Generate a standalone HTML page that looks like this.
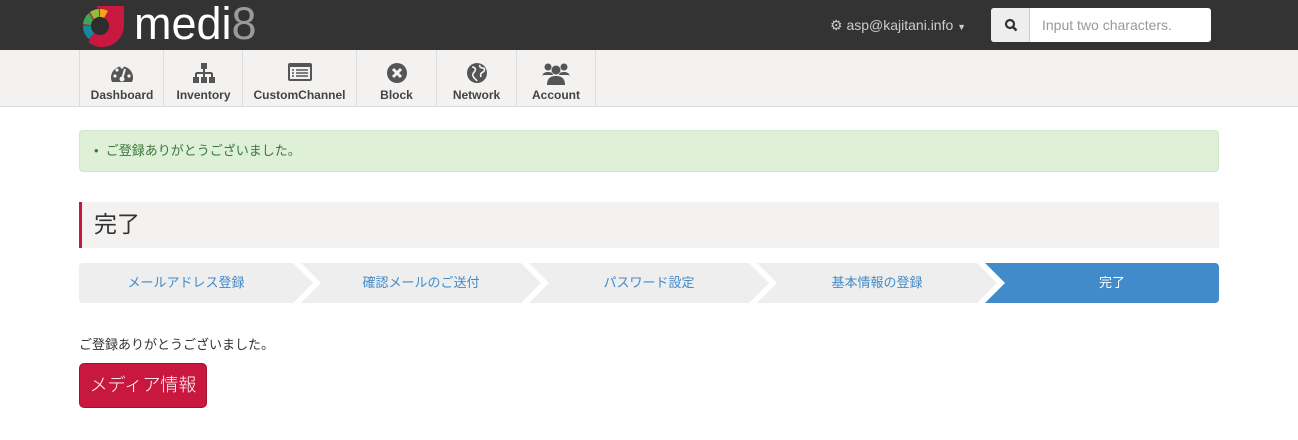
<!DOCTYPE html>
<html><head><meta charset="utf-8"><style>
*{box-sizing:border-box;margin:0;padding:0}
body{width:1298px;height:440px;background:#fff;font-family:"Liberation Sans","Noto Sans CJK JP",sans-serif;position:relative;overflow:hidden;font-size:13px}
.top{position:absolute;left:0;top:0;width:1298px;height:50px;background:#333}
.nav{position:absolute;left:0;top:50px;width:1298px;height:57px;background:#f3f2f0;border-bottom:1px solid #ddd}
.ni{position:absolute;top:0;height:56px;border-left:1px solid #ddd;text-align:center;color:#444;font-weight:bold;font-size:12px}
.ni span{position:absolute;left:0;right:0;top:38px}
.ni svg{position:absolute;left:50%;top:12px;transform:translateX(-50%)}
.abs{position:absolute}
.step{position:absolute;top:263px;height:40px;color:#428bca;font-size:13px;line-height:40px;text-align:center}
</style></head><body>
<div class="top">
  <svg class="abs" style="left:80px;top:4px" width="46" height="44" viewBox="0 0 46 44">
    <path d="M16 2 L44 2 L44 22 A22 22 0 0 1 8 38 L20 28 A9 9 0 0 0 28 14 Z" fill="#c8183f"/>
    <circle cx="20" cy="22" r="17" fill="#c8183f"/>
    <path d="M20 5 A17 17 0 0 1 28 7 L24 14 A9 9 0 0 0 20 13Z" fill="#f3a51c"/>
    <path d="M10 8 A17 17 0 0 1 19 5 L19 13 A9 9 0 0 0 14 15Z" fill="#8fbf3a"/>
    <path d="M3 20 A17 17 0 0 1 9 9 L13 16 A9 9 0 0 0 11 21Z" fill="#3aa857"/>
    <path d="M3 22 L11 22 A9 9 0 0 0 14 29 L9 35 A17 17 0 0 1 3 22Z" fill="#138a9e"/>
    <circle cx="20" cy="22" r="9" fill="#2d2d2d"/>
  </svg>
  <div class="abs" style="left:134px;top:0px;font-size:45px;color:#fff;letter-spacing:0px;line-height:48px">medi<span style="color:#9a9a9a;font-weight:300">8</span></div>
  <div class="abs" style="left:830px;top:17px;color:#ccc;font-size:14px">&#9881; asp@kajitani.info <span style="font-size:9px">&#9660;</span></div>
  <div class="abs" style="left:991px;top:8px;width:220px;height:34px;background:#fff;border-radius:3px"></div>
  <div class="abs" style="left:991px;top:8px;width:39px;height:34px;background:#eee;border-right:1px solid #ccc;border-radius:3px 0 0 3px"></div>
  <svg class="abs" style="left:1004px;top:18px" width="14" height="14" viewBox="0 0 14 14"><circle cx="6" cy="6" r="4" stroke="#333" stroke-width="2.2" fill="none"/><path d="M9 9l3.5 3.5" stroke="#333" stroke-width="2.5"/></svg>
  <div class="abs" style="left:1042px;top:17px;color:#999;font-size:14px">Input two characters.</div>
</div>
<div class="nav">
  <div class="ni" style="left:79px;width:85px"><svg width="26" height="22" viewBox="0 0 26 22"><path d="M3 20A11 11 0 1 1 23 20Z" fill="#555"/><circle cx="13" cy="17" r="2.5" fill="#f3f2f0"/><path d="M13 17L16 7" stroke="#f3f2f0" stroke-width="2"/><circle cx="6" cy="14" r="1.6" fill="#f3f2f0"/><circle cx="8" cy="8" r="1.6" fill="#f3f2f0"/><circle cx="20" cy="14" r="1.6" fill="#f3f2f0"/><circle cx="13" cy="5" r="1.6" fill="#f3f2f0"/></svg><span>Dashboard</span></div>
  <div class="ni" style="left:163px;width:80px"><svg width="24" height="22" viewBox="0 0 24 22"><rect x="9" y="1" width="6" height="6" fill="#555"/><path d="M12 7v4M4 11h16M4 11v4M12 11v4M20 11v4" stroke="#555" stroke-width="2" fill="none"/><rect x="1" y="15" width="6" height="6" fill="#555"/><rect x="9" y="15" width="6" height="6" fill="#555"/><rect x="17" y="15" width="6" height="6" fill="#555"/></svg><span>Inventory</span></div>
  <div class="ni" style="left:242px;width:114px"><svg width="26" height="20" viewBox="0 0 26 20"><rect x="1" y="1" width="24" height="18" rx="2" fill="#555"/><rect x="3" y="5" width="20" height="12" fill="#f3f2f0"/><path d="M5 8h2M9 8h12M5 11h2M9 11h12M5 14h2M9 14h12" stroke="#555" stroke-width="1.5"/></svg><span>CustomChannel</span></div>
  <div class="ni" style="left:356px;width:80px"><svg width="22" height="22" viewBox="0 0 22 22"><circle cx="11" cy="11" r="10" fill="#555"/><path d="M7 7l8 8M15 7l-8 8" stroke="#f3f2f0" stroke-width="3"/></svg><span>Block</span></div>
  <div class="ni" style="left:436px;width:80px"><svg width="22" height="22" viewBox="0 0 22 22"><circle cx="11" cy="11" r="10" fill="#555"/><path d="M6 5c3 0 4 2 3 4s-3 2-2 5 3 3 4 5M14 3c-1 2 1 3 3 3s2 3 0 4-3 2-2 5" stroke="#f3f2f0" stroke-width="1.6" fill="none"/></svg><span>Network</span></div>
  <div class="ni" style="left:516px;width:80px;border-right:1px solid #ddd"><svg width="30" height="24" viewBox="0 0 30 24"><circle cx="7" cy="5" r="3.5" fill="#555"/><circle cx="23" cy="5" r="3.5" fill="#555"/><circle cx="15" cy="8" r="4.5" fill="#555"/><path d="M1 16c0-5 3-6 6-6s5 1 5 3H1z" fill="#555"/><path d="M29 16c0-5-3-6-6-6s-5 1-5 3h11z" fill="#555"/><path d="M6 23c0-7 4-9 9-9s9 2 9 9z" fill="#555"/></svg><span>Account</span></div>
</div>
<div class="abs" style="left:79px;top:130px;width:1140px;height:42px;background:#dff0d8;border:1px solid #d0e9c6;border-radius:4px;color:#3c763d;font-size:13px;line-height:40px;padding-left:14px">•&nbsp;&nbsp;ご登録ありがとうございました。</div>
<div class="abs" style="left:79px;top:202px;width:1140px;height:46px;background:#f3f2f0;border-left:3px solid #c8183f;font-size:23px;color:#333;line-height:44px;padding-left:12px">完了</div>
<div class="step" style="left:79px;width:234px;background:#eee;clip-path:polygon(0 0,214px 0,234px 20px,214px 40px,0 40px);border-radius:4px 0 0 4px"><span style="margin-right:20px">メールアドレス登録</span></div>
<div class="step" style="left:301px;width:240px;background:#eee;clip-path:polygon(0 0,220px 0,240px 20px,220px 40px,0 40px,20px 20px)">確認メールのご送付</div>
<div class="step" style="left:529px;width:240px;background:#eee;clip-path:polygon(0 0,220px 0,240px 20px,220px 40px,0 40px,20px 20px)">パスワード設定</div>
<div class="step" style="left:757px;width:240px;background:#eee;clip-path:polygon(0 0,220px 0,240px 20px,220px 40px,0 40px,20px 20px)">基本情報の登録</div>
<div class="step" style="left:985px;width:234px;background:#428bca;color:#fff;border-radius:0 4px 4px 0;clip-path:polygon(0 0,234px 0,234px 40px,0 40px,20px 20px)"><span style="margin-left:20px">完了</span></div>
<div class="abs" style="left:79px;top:334px;font-size:13px;color:#333">ご登録ありがとうございました。</div>
<div class="abs" style="left:79px;top:363px;width:128px;height:45px;background:#c8183f;border:1px solid #a0132f;border-radius:5px;color:#fff;font-size:18px;line-height:43px;text-align:center;font-weight:300">メディア情報</div>
</body></html>
